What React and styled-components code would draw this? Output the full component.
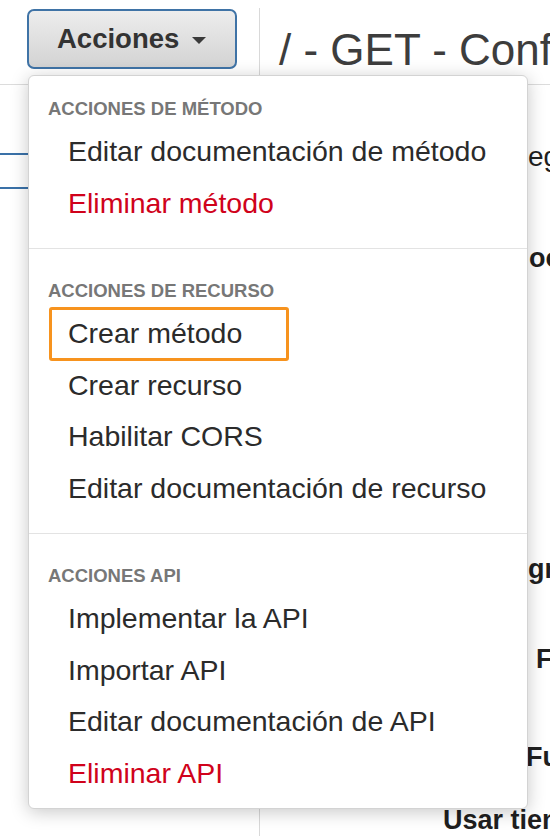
import React from "react";
import styled, { createGlobalStyle } from "styled-components";

const GlobalStyle = createGlobalStyle`
  html, body {
    margin: 0;
    padding: 0;
    background: #fff;
    overflow: hidden;
  }
  body {
    font-family: "Liberation Sans", Arial, sans-serif;
    color: #333;
  }
`;

const Page = styled.div`
  display: flex;
  height: 828px;
  padding-top: 8px;
  overflow: hidden;
`;

const Sidebar = styled.aside`
  width: 259px;
  flex-shrink: 0;
  border-right: 1px solid #d9d9d9;
`;

const Toolbar = styled.div`
  height: 77px;
  padding: 1px 0 0 27px;
  box-sizing: border-box;
  border-bottom: 1px solid #dcdcdc;
`;

const Dropdown = styled.div`
  position: relative;
  display: inline-block;
`;

const ActionButton = styled.button`
  display: flex;
  align-items: center;
  gap: 13px;
  width: 210px;
  height: 60px;
  padding: 0 0 0 28px;
  box-sizing: border-box;
  border: 2px solid #3f73a6;
  border-radius: 7px;
  background: linear-gradient(#ededed, #d3d3d3);
  font-family: "Liberation Sans", Arial, sans-serif;
  font-size: 27.5px;
  font-weight: 700;
  color: #333;
`;

const Caret = styled.span`
  width: 0;
  height: 0;
  margin-top: 3px;
  border-left: 7px solid transparent;
  border-right: 7px solid transparent;
  border-top: 7px solid #3a3a3a;
`;

const Menu = styled.div`
  position: absolute;
  top: calc(100% + 6px);
  left: 1px;
  z-index: 10;
  width: 500px;
  box-sizing: border-box;
  padding: 21px 0 9px;
  background: #fff;
  border: 1px solid #d3d3d3;
  border-radius: 6px;
  box-shadow: 0 3px 18px rgba(0, 0, 0, 0.22);
`;

const SectionTitle = styled.div`
  padding-left: 19px;
  margin-bottom: 5px;
  font-size: 18.5px;
  line-height: 24px;
  font-weight: 700;
  color: #777;
  text-transform: uppercase;
  white-space: nowrap;
`;

const MenuItem = styled.div`
  width: fit-content;
  padding: 0 46px 0 ${(p) => (p.$focused ? "18px" : "39px")};
  margin-left: ${(p) => (p.$focused ? "21px" : "0")};
  font-size: 28.5px;
  line-height: 51.5px;
  white-space: nowrap;
  color: ${(p) => (p.$danger ? "#d0021b" : "#2b2b2b")};
  outline: ${(p) => (p.$focused ? "3px solid #f7931e" : "none")};
  outline-offset: -2px;
  border-radius: 2px;
`;

const Divider = styled.div`
  height: 1px;
  margin: 18.5px 0 30.5px;
  background: #e3e3e3;
`;

const Tree = styled.div`
  padding-top: 68px;
`;

const TreeRow = styled.div`
  height: 32px;
  border-top: 2px solid ${(p) => (p.$selected ? "#3a71a8" : "transparent")};
  border-bottom: 2px solid ${(p) => (p.$selected ? "#3a71a8" : "transparent")};
`;

const Main = styled.main`
  flex: 1;
  min-width: 0;
  overflow: hidden;
`;

const Header = styled.div`
  height: 77px;
  padding: 20px 0 0 19px;
  box-sizing: border-box;
  border-bottom: 1px solid #dcdcdc;
`;

const Title = styled.h1`
  margin: 0;
  font-size: 44px;
  line-height: 44px;
  font-weight: 400;
  color: #3d3d3d;
  white-space: nowrap;
`;

const Field = styled.div`
  margin-top: ${(p) => p.$space}px;
  padding-left: ${(p) => p.$indent}px;
  font-size: ${(p) => (p.$bold ? "27px" : "28px")};
  font-weight: ${(p) => (p.$bold ? 700 : 400)};
  line-height: 30px;
  color: #1f1f1f;
  white-space: nowrap;
`;

const sections = [
  {
    title: "Acciones de método",
    items: [
      { label: "Editar documentación de método" },
      { label: "Eliminar método", danger: true },
    ],
  },
  {
    title: "Acciones de recurso",
    items: [
      { label: "Crear método", focused: true },
      { label: "Crear recurso" },
      { label: "Habilitar CORS" },
      { label: "Editar documentación de recurso" },
    ],
  },
  {
    title: "Acciones API",
    items: [
      { label: "Implementar la API" },
      { label: "Importar API" },
      { label: "Editar documentación de API" },
      { label: "Eliminar API", danger: true },
    ],
  },
];

const fields = [
  { text: "eg", space: 57, indent: 268 },
  { text: "oo", space: 71, indent: 269, bold: true },
  { text: "gr", space: 281, indent: 268, bold: true },
  { text: "F", space: 60, indent: 276, bold: true },
  { text: "Fu", space: 68, indent: 266, bold: true },
  { text: "Usar tiempo de espera predeterminado", space: 33, indent: 183, bold: true },
];

const App = () => {
  return (
    <>
      <GlobalStyle />
      <Page>
        <Sidebar>
          <Toolbar>
            <Dropdown>
              <ActionButton>
                Acciones
                <Caret />
              </ActionButton>
              <Menu>
                {sections.map((section, i) => (
                  <React.Fragment key={section.title}>
                    {i > 0 && <Divider />}
                    <SectionTitle>{section.title}</SectionTitle>
                    {section.items.map((item) => (
                      <MenuItem
                        key={item.label}
                        $danger={item.danger}
                        $focused={item.focused}
                      >
                        {item.label}
                      </MenuItem>
                    ))}
                  </React.Fragment>
                ))}
              </Menu>
            </Dropdown>
          </Toolbar>
          <Tree>
            <TreeRow $selected />
          </Tree>
        </Sidebar>
        <Main>
          <Header>
            <Title>/ - GET - Configuración</Title>
          </Header>
          {fields.map((f) => (
            <Field key={f.text} $space={f.space} $indent={f.indent} $bold={f.bold}>
              {f.text}
            </Field>
          ))}
        </Main>
      </Page>
    </>
  );
};

export default App;
